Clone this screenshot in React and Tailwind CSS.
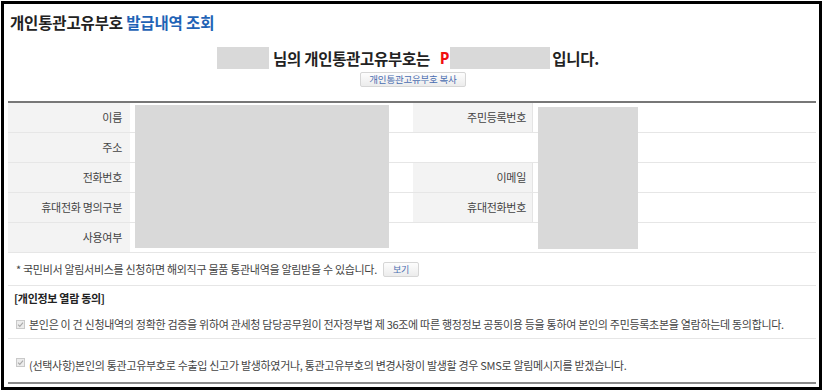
import React from "react";

const font = { fontFamily: '"Noto Sans CJK KR", "Noto Sans", sans-serif' };

function Check() {
  return (
    <span className="relative mr-[4px] inline-flex h-[9px] w-[9px] shrink-0 items-center justify-center border border-[#c9c9c9] bg-[#ececec]">
      <svg viewBox="0 0 10 10" className="h-[7px] w-[7px]">
        <path d="M1.5 5.2 L4 7.6 L8.6 2.4" fill="none" stroke="#a8a8a8" strokeWidth="1.6" />
      </svg>
    </span>
  );
}

function Label({ children, right }) {
  return (
    <div
      className={`flex h-full items-center justify-end bg-[#f3f3f3] ${right ? "pr-[6px] border-r border-[#e4e4e4]" : "pr-[8px]"} text-[11px] tracking-[-0.3px] text-[#444]`}
    >
      {children}
    </div>
  );
}

function Row({ children }) {
  return (
    <div className="grid h-[30px] grid-cols-[122px_283px_120px_1fr] border-b border-[#e6e6e6]">
      {children}
    </div>
  );
}

export default function App() {
  return (
    <div className="h-[390px] w-[822px] bg-white pl-px pt-px" style={font}>
      <div className="flex h-[389px] w-[821px] flex-col border-[3px] border-black pl-[4px] pr-[3px]">
        <div className="pl-[2px] pt-[7px] text-[15.5px] font-bold leading-[22px] tracking-[-0.15px] text-[#222]">
          개인통관고유부호 <span className="text-[#1f63b6]">발급내역 조회</span>
        </div>

        <div className="mt-[14px] flex items-center justify-center pr-[8px] text-[15.5px] font-bold leading-[22px] tracking-[-0.3px] text-[#222]">
          <span className="h-[22px] w-[52px] bg-[#d9d9d9]" />
          <span className="ml-[4px]">님의 개인통관고유부호는</span>
          <span className="ml-[10px] mr-[1px] text-[#f01010]" style={{ fontFamily: '"Open Sans", sans-serif' }}>P</span>
          <span className="h-[22px] w-[100px] bg-[#d9d9d9]" />
          <span className="ml-[2px]">입니다.</span>
        </div>

        <div className="mt-[3px] flex justify-center pl-[2px]">
          <button className="h-[15px] rounded-[2px] border border-[#d6d6d6] bg-gradient-to-b from-[#fdfdfd] to-[#ececec] px-[8px] text-[9.5px] leading-[13px] tracking-[-0.2px] text-[#4a6db0]">
            개인통관고유부호 복사
          </button>
        </div>

        <div className="relative mt-[14px]">
          <div className="h-[2px] bg-[#777]" />
          <Row>
            <Label>이름</Label>
            <div />
            <Label right>주민등록번호</Label>
            <div />
          </Row>
          <Row>
            <Label>주소</Label>
            <div className="col-span-3" />
          </Row>
          <Row>
            <Label>전화번호</Label>
            <div />
            <Label right>이메일</Label>
            <div />
          </Row>
          <Row>
            <Label>휴대전화 명의구분</Label>
            <div />
            <Label right>휴대전화번호</Label>
            <div />
          </Row>
          <Row>
            <Label>사용여부</Label>
            <div className="col-span-3" />
          </Row>
          <div className="absolute left-[127px] top-[4px] h-[143px] w-[254px] bg-[#d9d9d9]" />
          <div className="absolute left-[530px] top-[6px] h-[142px] w-[100px] bg-[#d9d9d9]" />

          <div className="flex h-[33px] items-center border-b border-[#e6e6e6] pl-[8px] text-[11px] tracking-[-0.3px] text-[#444]">
            <span>* 국민비서 알림서비스를 신청하면 해외직구 물품 통관내역을 알림받을 수 있습니다.</span>
            <button className="ml-[6px] h-[15px] w-[36px] rounded-[2px] border border-[#d6d6d6] bg-gradient-to-b from-[#fdfdfd] to-[#ececec] text-[9px] leading-[13px] text-[#4a6db0]">
              보기
            </button>
          </div>

          <div className="flex h-[25px] items-center pl-[6px] text-[11px] font-bold tracking-[-0.3px] text-[#222]">
            [개인정보 열람 동의]
          </div>

          <div className="flex h-[28px] items-center border-b border-[#e6e6e6] pb-[1px] pl-[8px] text-[11px] tracking-[-0.3px] text-[#444]">
            <Check />
            <span>본인은 이 건 신청내역의 정확한 검증을 위하여 관세청 담당공무원이 전자정부법 제 36조에 따른 행정정보 공동이용 등을 통하여 본인의 주민등록초본을 열람하는데 동의합니다.</span>
          </div>

          <div className="flex h-[45px] items-start border-b-2 border-[#8a8a8a] pl-[8px] pt-[19px] text-[11px] leading-[14px] tracking-[-0.3px] text-[#444]">
            <Check />
            <span>(선택사항)본인의 통관고유부호로 수출입 신고가 발생하였거나, 통관고유부호의 변경사항이 발생할 경우 SMS로 알림메시지를 받겠습니다.</span>
          </div>
        </div>
      </div>
    </div>
  );
}
